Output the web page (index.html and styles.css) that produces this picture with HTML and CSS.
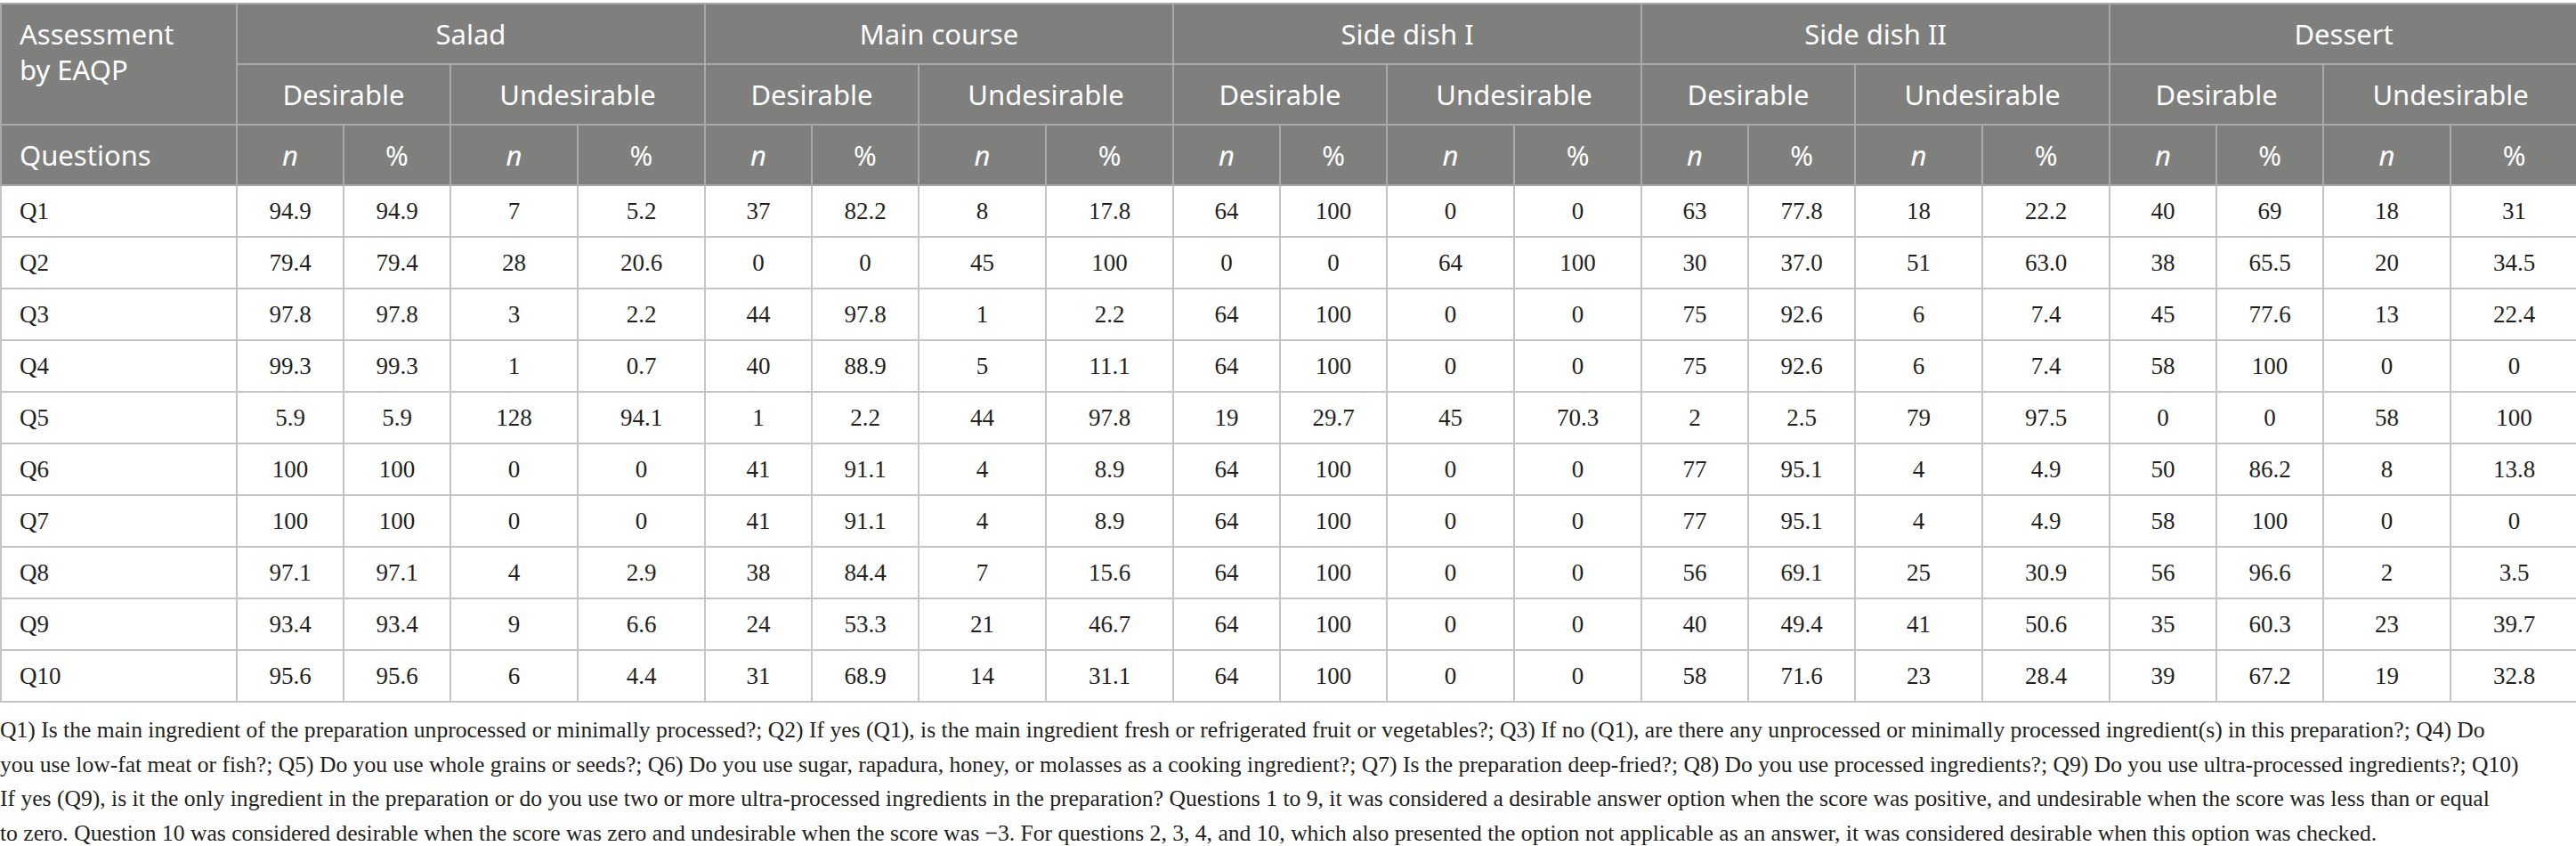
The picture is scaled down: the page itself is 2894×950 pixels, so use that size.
FILE: index.html
```html
<!DOCTYPE html>
<html lang="en">
<head>
  <meta charset="UTF-8">
  <meta name="viewport" content="width=device-width, initial-scale=1.0">
  <title>Assessment by EAQP</title>
  <link rel="stylesheet" href="styles.css">
</head>
<body>
  <div class="table-wrap">
    <table class="eaqp">
      <colgroup>
        <col class="col-q">
        <col class="col-d"><col class="col-d"><col class="col-u"><col class="col-u">
        <col class="col-d"><col class="col-d"><col class="col-u"><col class="col-u">
        <col class="col-d"><col class="col-d"><col class="col-u"><col class="col-u">
        <col class="col-d"><col class="col-d"><col class="col-u"><col class="col-u">
        <col class="col-d"><col class="col-d"><col class="col-u"><col class="col-u">
      </colgroup>
      <thead>
        <tr>
          <th rowspan="2" class="left top">Assessment<br>by EAQP</th>
          <th colspan="4">Salad</th>
          <th colspan="4">Main course</th>
          <th colspan="4">Side dish I</th>
          <th colspan="4">Side dish II</th>
          <th colspan="4">Dessert</th>
        </tr>
        <tr>
          <th colspan="2">Desirable</th><th colspan="2">Undesirable</th>
          <th colspan="2">Desirable</th><th colspan="2">Undesirable</th>
          <th colspan="2">Desirable</th><th colspan="2">Undesirable</th>
          <th colspan="2">Desirable</th><th colspan="2">Undesirable</th>
          <th colspan="2">Desirable</th><th colspan="2">Undesirable</th>
        </tr>
        <tr>
          <th class="left">Questions</th>
          <th><i>n</i></th><th>%</th><th><i>n</i></th><th>%</th>
          <th><i>n</i></th><th>%</th><th><i>n</i></th><th>%</th>
          <th><i>n</i></th><th>%</th><th><i>n</i></th><th>%</th>
          <th><i>n</i></th><th>%</th><th><i>n</i></th><th>%</th>
          <th><i>n</i></th><th>%</th><th><i>n</i></th><th>%</th>
        </tr>
      </thead>
      <tbody>
        <tr><td>Q1</td><td>94.9</td><td>94.9</td><td>7</td><td>5.2</td><td>37</td><td>82.2</td><td>8</td><td>17.8</td><td>64</td><td>100</td><td>0</td><td>0</td><td>63</td><td>77.8</td><td>18</td><td>22.2</td><td>40</td><td>69</td><td>18</td><td>31</td></tr>
        <tr><td>Q2</td><td>79.4</td><td>79.4</td><td>28</td><td>20.6</td><td>0</td><td>0</td><td>45</td><td>100</td><td>0</td><td>0</td><td>64</td><td>100</td><td>30</td><td>37.0</td><td>51</td><td>63.0</td><td>38</td><td>65.5</td><td>20</td><td>34.5</td></tr>
        <tr><td>Q3</td><td>97.8</td><td>97.8</td><td>3</td><td>2.2</td><td>44</td><td>97.8</td><td>1</td><td>2.2</td><td>64</td><td>100</td><td>0</td><td>0</td><td>75</td><td>92.6</td><td>6</td><td>7.4</td><td>45</td><td>77.6</td><td>13</td><td>22.4</td></tr>
        <tr><td>Q4</td><td>99.3</td><td>99.3</td><td>1</td><td>0.7</td><td>40</td><td>88.9</td><td>5</td><td>11.1</td><td>64</td><td>100</td><td>0</td><td>0</td><td>75</td><td>92.6</td><td>6</td><td>7.4</td><td>58</td><td>100</td><td>0</td><td>0</td></tr>
        <tr><td>Q5</td><td>5.9</td><td>5.9</td><td>128</td><td>94.1</td><td>1</td><td>2.2</td><td>44</td><td>97.8</td><td>19</td><td>29.7</td><td>45</td><td>70.3</td><td>2</td><td>2.5</td><td>79</td><td>97.5</td><td>0</td><td>0</td><td>58</td><td>100</td></tr>
        <tr><td>Q6</td><td>100</td><td>100</td><td>0</td><td>0</td><td>41</td><td>91.1</td><td>4</td><td>8.9</td><td>64</td><td>100</td><td>0</td><td>0</td><td>77</td><td>95.1</td><td>4</td><td>4.9</td><td>50</td><td>86.2</td><td>8</td><td>13.8</td></tr>
        <tr><td>Q7</td><td>100</td><td>100</td><td>0</td><td>0</td><td>41</td><td>91.1</td><td>4</td><td>8.9</td><td>64</td><td>100</td><td>0</td><td>0</td><td>77</td><td>95.1</td><td>4</td><td>4.9</td><td>58</td><td>100</td><td>0</td><td>0</td></tr>
        <tr><td>Q8</td><td>97.1</td><td>97.1</td><td>4</td><td>2.9</td><td>38</td><td>84.4</td><td>7</td><td>15.6</td><td>64</td><td>100</td><td>0</td><td>0</td><td>56</td><td>69.1</td><td>25</td><td>30.9</td><td>56</td><td>96.6</td><td>2</td><td>3.5</td></tr>
        <tr><td>Q9</td><td>93.4</td><td>93.4</td><td>9</td><td>6.6</td><td>24</td><td>53.3</td><td>21</td><td>46.7</td><td>64</td><td>100</td><td>0</td><td>0</td><td>40</td><td>49.4</td><td>41</td><td>50.6</td><td>35</td><td>60.3</td><td>23</td><td>39.7</td></tr>
        <tr><td>Q10</td><td>95.6</td><td>95.6</td><td>6</td><td>4.4</td><td>31</td><td>68.9</td><td>14</td><td>31.1</td><td>64</td><td>100</td><td>0</td><td>0</td><td>58</td><td>71.6</td><td>23</td><td>28.4</td><td>39</td><td>67.2</td><td>19</td><td>32.8</td></tr>
      </tbody>
    </table>
    <p class="footnote">Q1) Is the main ingredient of the preparation unprocessed or minimally processed?; Q2) If yes (Q1), is the main ingredient fresh or refrigerated fruit or vegetables?; Q3) If no (Q1), are there any unprocessed or minimally processed ingredient(s) in this preparation?; Q4) Do<br>you use low-fat meat or fish?; Q5) Do you use whole grains or seeds?; Q6) Do you use sugar, rapadura, honey, or molasses as a cooking ingredient?; Q7) Is the preparation deep-fried?; Q8) Do you use processed ingredients?; Q9) Do you use ultra-processed ingredients?; Q10)<br>If yes (Q9), is it the only ingredient in the preparation or do you use two or more ultra-processed ingredients in the preparation? Questions 1 to 9, it was considered a desirable answer option when the score was positive, and undesirable when the score was less than or equal<br>to zero. Question 10 was considered desirable when the score was zero and undesirable when the score was −3. For questions 2, 3, 4, and 10, which also presented the option not applicable as an answer, it was considered desirable when this option was checked.</p>
  </div>
</body>
</html>
```

FILE: styles.css
```css
* {
  margin: 0;
  padding: 0;
  box-sizing: border-box;
}

html, body {
  background: #ffffff;
  color: #231f20;
}

.table-wrap {
  padding-top: 3px;
  width: 2894px;
}

.eaqp {
  width: 2894px;
  border-collapse: collapse;
  table-layout: fixed;
}

.col-q { width: 265px; }
.col-d { width: 120px; }
.col-u { width: 143px; }

.eaqp th {
  background: #7f807e;
  color: #ffffff;
  font-family: 'Noto Sans', sans-serif;
  font-weight: 400;
  font-size: 31px;
  line-height: 40px;
  padding: 13px 10px;
  text-align: center;
  border: 2px solid #a9aaa8;
}

.eaqp th i {
  font-style: italic;
}

.eaqp th.left {
  text-align: left;
  padding-left: 20px;
}

.eaqp th.top {
  vertical-align: top;
}

.eaqp td {
  font-family: 'Liberation Serif', serif;
  font-size: 27px;
  line-height: 30px;
  padding: 13px 10px;
  text-align: center;
  border: 2px solid #c4c4c4;
}

.eaqp td:first-child {
  text-align: left;
  padding-left: 20px;
}

.footnote {
  font-family: 'Liberation Serif', serif;
  font-size: 25.6px;
  line-height: 38.5px;
  margin-top: 12px;
}
```
